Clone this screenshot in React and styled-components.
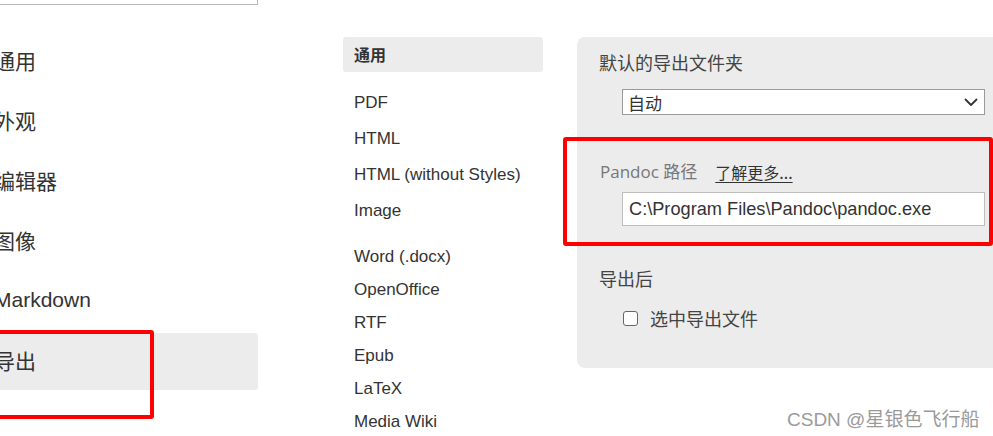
import styled, { createGlobalStyle } from 'styled-components';

const GlobalStyle = createGlobalStyle`
  html, body {
    margin: 0;
    padding: 0;
    background: #fff;
    overflow: hidden;
  }
  body {
    font-family: "Liberation Sans", "Noto Sans CJK SC", sans-serif;
    color: #333;
  }
`;

const Page = styled.div`
  position: relative;
  width: 993px;
  height: 436px;
  display: flex;
  align-items: flex-start;
  overflow: hidden;
`;

const Sidebar = styled.div`
  flex: none;
  width: 278px;
  margin-left: -20px;
  display: flex;
  flex-direction: column;
`;

const SearchBox = styled.div`
  height: 30px;
  margin-top: -27px;
  border: 1px solid #b8b8b8;
  background: #fff;
  width: 276px;
`;

const NavList = styled.div`
  display: flex;
  flex-direction: column;
  gap: 3px;
  padding-top: 28px;
`;

const NavItem = styled.div`
  height: 57px;
  box-sizing: border-box;
  display: flex;
  align-items: center;
  padding: 0 0 3px 14px;
  font-size: 21px;
  color: #333;
  border-radius: 3px;
  background: ${({ $active }) => ($active ? '#ececec' : 'transparent')};
`;

const Formats = styled.div`
  flex: none;
  width: 200px;
  margin-left: 85px;
  margin-top: 37px;
  display: flex;
  flex-direction: column;
`;

const FormatHeader = styled.div`
  height: 35px;
  display: flex;
  align-items: center;
  padding-left: 11px;
  padding-bottom: 2px;
  box-sizing: border-box;
  background: #ececec;
  border-radius: 3px;
  font-family: "Noto Sans CJK SC", sans-serif;
  font-weight: 700;
  font-size: 16px;
  color: #333;
`;

const FormatGroup = styled.div`
  display: flex;
  flex-direction: column;
  margin-top: ${({ $top }) => $top}px;
`;

const FormatItem = styled.div`
  height: ${({ $h }) => $h}px;
  display: flex;
  align-items: center;
  padding-left: 11px;
  font-size: 17px;
  color: #333;
`;

const Panel = styled.div`
  flex: none;
  width: 433px;
  margin-left: 34px;
  margin-top: 37px;
  background: #ececec;
  border-radius: 8px;
  padding: 13px 25px 38px 22px;
  box-sizing: border-box;
  display: flex;
  flex-direction: column;
`;

const SectionTitle = styled.div`
  font-family: "Noto Sans CJK SC", sans-serif;
  font-size: 18px;
  line-height: 24px;
  color: #444;
  margin-top: ${({ $top }) => $top || 0}px;
`;

const PandocLabel = styled.div`
  display: flex;
  align-items: center;
  gap: 18px;
  margin-top: 44px;
  margin-left: 1px;
  line-height: 24px;
  font-size: 17px;
  color: #777;
  font-family: "Open Sans", "Noto Sans CJK SC", sans-serif;

  span.cjk {
    font-family: "Noto Sans CJK SC", sans-serif;
  }
`;

const LearnMore = styled.a`
  font-family: "Noto Sans CJK SC", sans-serif;
  color: #333;
  font-size: 16px;
  text-decoration: underline;
  text-underline-offset: 3px;
`;

const SelectBox = styled.div`
  margin: 15px 0 0 23px;
  height: 26px;
  background: #fff;
  border: 1px solid #9a9a9a;
  box-sizing: border-box;
  display: flex;
  align-items: center;
  justify-content: space-between;
  padding: 0 6px 0 5px;
  font-family: "Noto Sans CJK SC", sans-serif;
  font-size: 17px;
  color: #333;
`;

const TextInput = styled.div`
  margin: 8px 0 0 23px;
  height: 34px;
  background: #fff;
  border: 1px solid #bdbdbd;
  box-sizing: border-box;
  display: flex;
  align-items: center;
  padding-left: 6px;
  font-size: 18.2px;
  color: #333;
`;

const CheckRow = styled.label`
  display: flex;
  align-items: center;
  gap: 12px;
  margin: 16px 0 0 24px;
  height: 24px;
  font-family: "Noto Sans CJK SC", sans-serif;
  font-size: 18px;
  color: #444;
`;

const Box = styled.span`
  width: 15px;
  height: 15px;
  box-sizing: border-box;
  border: 1.5px solid #666;
  border-radius: 3px;
  background: #fff;
`;

const Highlight = styled.div`
  position: absolute;
  left: ${({ $x }) => $x}px;
  top: ${({ $y }) => $y}px;
  width: ${({ $w }) => $w}px;
  height: ${({ $h }) => $h}px;
  border: 4px solid #ff0000;
  border-radius: 3px;
  box-sizing: border-box;
  pointer-events: none;
`;

const Watermark = styled.div`
  position: absolute;
  left: 787px;
  top: 404px;
  font-family: "Liberation Sans", "Noto Sans CJK SC", sans-serif;
  font-size: 19px;
  color: #9a9a9a;
  text-shadow: 0 0 2px #fff;
`;

const navItems = ['通用', '外观', '编辑器', '图像', 'Markdown', '导出'];
const groupOne = ['PDF', 'HTML', 'HTML (without Styles)', 'Image'];
const groupTwo = ['Word (.docx)', 'OpenOffice', 'RTF', 'Epub', 'LaTeX', 'Media Wiki'];

const Chevron = () => (
  <svg width="14" height="9" viewBox="0 0 14 9" fill="none">
    <path d="M1.5 1.5 L7 7 L12.5 1.5" stroke="#333" strokeWidth="1.8" strokeLinecap="round" strokeLinejoin="round" />
  </svg>
);

export default function App() {
  return (
    <>
      <GlobalStyle />
      <Page>
        <Sidebar>
          <SearchBox />
          <NavList>
            {navItems.map(item => (
              <NavItem key={item} $active={item === '导出'}>{item}</NavItem>
            ))}
          </NavList>
        </Sidebar>

        <Formats>
          <FormatHeader>通用</FormatHeader>
          <FormatGroup $top={13}>
            {groupOne.map(f => <FormatItem key={f} $h={36}>{f}</FormatItem>)}
          </FormatGroup>
          <FormatGroup $top={11}>
            {groupTwo.map(f => <FormatItem key={f} $h={33}>{f}</FormatItem>)}
          </FormatGroup>
        </Formats>

        <Panel>
          <SectionTitle>默认的导出文件夹</SectionTitle>
          <SelectBox>
            <span>自动</span>
            <Chevron />
          </SelectBox>
          <PandocLabel>
            <span>Pandoc <span className="cjk">路径</span></span>
            <LearnMore>了解更多...</LearnMore>
          </PandocLabel>
          <TextInput>C:\Program Files\Pandoc\pandoc.exe</TextInput>
          <SectionTitle $top={40}>导出后</SectionTitle>
          <CheckRow>
            <Box />
            选中导出文件
          </CheckRow>
        </Panel>

        <Highlight $x={-10} $y={330} $w={164} $h={89} />
        <Highlight $x={563} $y={137} $w={430} $h={109} />
        <Watermark>CSDN @星银色飞行船</Watermark>
      </Page>
    </>
  );
}
